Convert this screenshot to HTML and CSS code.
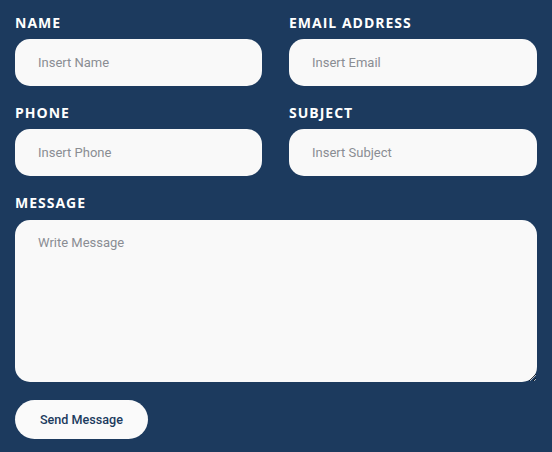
FILE: index.html
```html
<!DOCTYPE html>
<html>
<head>
<meta charset="utf-8">
<link rel="stylesheet" href="styles.css">
</head>
<body>
<form class="contact">
  <div class="grid">
    <div class="field">
      <label class="label">NAME</label>
      <input class="input" type="text" placeholder="Insert Name">
    </div>
    <div class="field">
      <label class="label">EMAIL ADDRESS</label>
      <input class="input" type="text" placeholder="Insert Email">
    </div>
    <div class="field">
      <label class="label">PHONE</label>
      <input class="input" type="text" placeholder="Insert Phone">
    </div>
    <div class="field">
      <label class="label">SUBJECT</label>
      <input class="input" type="text" placeholder="Insert Subject">
    </div>
    <div class="field full">
      <label class="label">MESSAGE</label>
      <textarea class="input area" placeholder="Write Message"></textarea>
    </div>
  </div>
  <button class="send" type="button">Send Message</button>
</form>
</body>
</html>
```
FILE: styles.css
```css
html, body {
  margin: 0;
  padding: 0;
  background: #1c3a5e;
}
.contact {
  padding: 14px 15px 0 15px;
  display: flex;
  flex-direction: column;
  align-items: flex-start;
}
.grid {
  width: 100%;
  display: grid;
  grid-template-columns: 247px 1fr;
  column-gap: 27px;
  row-gap: 18px;
}
.field {
  display: flex;
  flex-direction: column;
}
.full {
  grid-column: 1 / 3;
}
.label {
  font-family: "Open Sans", sans-serif;
  font-weight: 700;
  font-size: 14px;
  line-height: 17px;
  letter-spacing: 1px;
  color: #ffffff;
  margin-bottom: 8px;
}
.input {
  box-sizing: border-box;
  height: 47px;
  border: none;
  border-radius: 15px;
  background: #f9f9f9;
  padding: 0 23px;
  font-family: "Roboto", sans-serif;
  font-size: 13px;
  color: #333;
  outline: none;
}
.input::placeholder {
  color: #8a8d93;
}
.area {
  height: 162px;
  padding-top: 15px;
  margin-top: 1px;
  resize: vertical;
}
.send {
  margin-top: 18px;
  width: 133px;
  height: 39px;
  padding: 0;
  border: none;
  border-radius: 20px;
  background: #fafafa;
  color: #1c3a5e;
  font-family: "Roboto", sans-serif;
  font-weight: 500;
  font-size: 12.6px;
  text-align: center;
}
```
